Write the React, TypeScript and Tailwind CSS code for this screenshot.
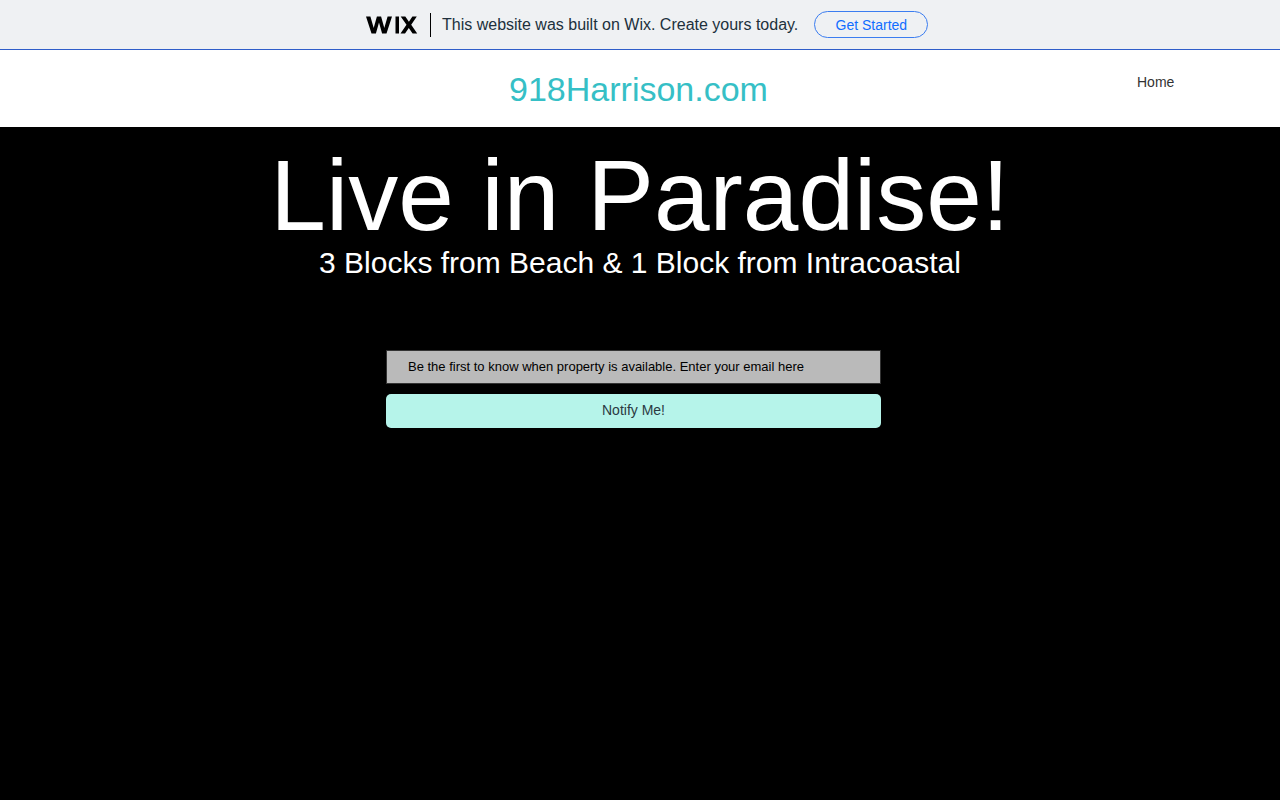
import React from "react";

const font = "font-['Liberation_Sans',Arial,sans-serif]";

const WixLogo = () => (
  <svg width="53" height="18" viewBox="0 0 53 18" fill="#000">
    <path d="M0 .5h4.400l3.300 11.500L10.900 .5h4.200l3.200 11.500L21.600 .5H26L20.500 17.500h-4.400L13 6.500 9.900 17.500H5.500Z" />
    <rect x="29.500" y="0.500" width="3.500" height="17" />
    <path d="M34.700 .5h4.600l3.600 5.200 3.500-5.200h4.400l-5.600 8.200 6 8.800h-4.600l-3.800-5.600-3.800 5.600h-4.500l6-8.800Z" />
  </svg>
);

export default function App() {
  return (
    <div className={`min-h-[800px] bg-black flex flex-col ${font}`}>
      <div className="h-[50px] bg-[#eff1f3] border-b border-[#2f5dc9] flex items-center pl-[366px]">
        <WixLogo />
        <div className="w-px h-[24px] bg-black ml-[11px]" />
        <span className="ml-[11px] text-[16px] text-[#20303c] whitespace-nowrap">
          This website was built on Wix. Create yours today.
        </span>
        <a className="ml-[16px] w-[114px] h-[27px] rounded-full border border-[#3b7df0] text-[#116dff] text-[14px] leading-[16px] pt-[1px] flex items-center justify-center">
          Get Started
        </a>
      </div>

      <header className="h-[77px] bg-white flex items-start">
        <div className="w-[1137px] pt-[18px] text-center text-[34px] leading-[42px] text-[#36bfc6] pl-[140px]">
          918Harrison.com
        </div>
        <nav className="pt-[24px] text-[14px] leading-[16px] text-[#333333]">Home</nav>
      </header>

      <main className="flex flex-col items-center flex-1">
        <h1 className="mt-[16px] text-[100px] leading-[104px] text-white font-normal whitespace-nowrap">
          Live in Paradise!
        </h1>
        <p className="-mt-[1px] text-[30px] leading-[34px] text-white whitespace-nowrap">
          3 Blocks from Beach &amp; 1 Block from Intracoastal
        </p>
        <form className="mt-[70px] w-[495px] mr-[13px] flex flex-col gap-[10px]">
          <input
            readOnly
            placeholder="Be the first to know when property is available. Enter your email here"
            className="h-[34px] w-full bg-[#bababa] border border-[#333333] pl-[21px] pb-[2px] text-[13px] placeholder:text-black outline-none"
          />
          <button
            type="button"
            className="h-[34px] w-full rounded-[5px] bg-[#b6f4ea] pb-[2px] text-[14px] text-[#2b3a42]"
          >
            Notify Me!
          </button>
        </form>
      </main>
    </div>
  );
}
